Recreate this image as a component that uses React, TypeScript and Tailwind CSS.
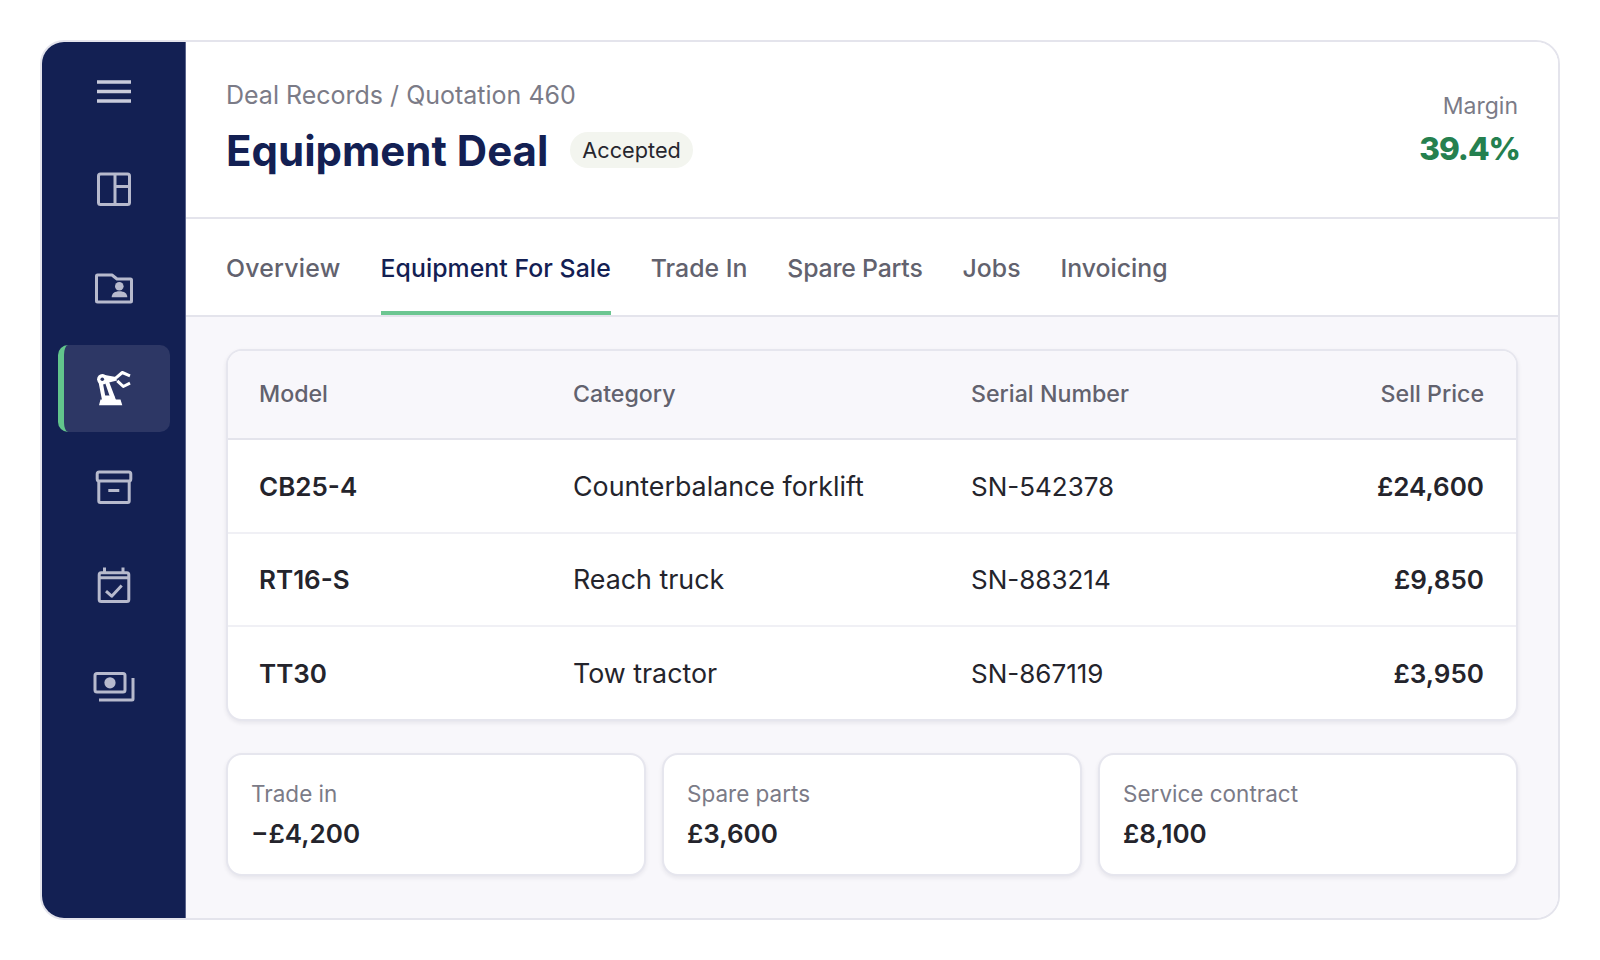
import React from "react";

const rows = [
  ["CB25-4", "Counterbalance forklift", "SN-542378", "£24,600"],
  ["RT16-S", "Reach truck", "SN-883214", "£9,850"],
  ["TT30", "Tow tractor", "SN-867119", "£3,950"],
];
const tabs = [
  { t: "Overview", c: "text-[#62626e] border-transparent tracking-[0.25px]" },
  { t: "Equipment For Sale", c: "text-[#132053] border-[#6cc691] tracking-[0.06px]" },
  { t: "Trade In", c: "text-[#62626e] border-transparent" },
  { t: "Spare Parts", c: "text-[#62626e] border-transparent tracking-[-0.2px]" },
  { t: "Jobs", c: "text-[#62626e] border-transparent" },
  { t: "Invoicing", c: "text-[#62626e] border-transparent" },
];
const cards = [
  ["Trade in", "−£4,200"],
  ["Spare parts", "£3,600"],
  ["Service contract", "£8,100"],
];

const Ico = ({ children }: { children: React.ReactNode }) => (
  <svg width="44" height="44" viewBox="0 0 44 44" fill="none" stroke="currentColor" strokeWidth="3" strokeLinejoin="round" strokeLinecap="butt">
    {children}
  </svg>
);

const item = "h-[88px] flex items-center justify-center text-[#b7bacd]";

function NavIcons() {
  return (
    <div className="flex flex-col gap-[11px] items-center pt-[5px]">
      <div className="h-[88px] flex items-center justify-center text-[#c9cbdb]">
        <Ico>
          <path d="M5 13h34M5 22.5h34M5 32h34" strokeWidth="3.4" />
        </Ico>
      </div>
      <div className={item}>
        <Ico>
          <rect x="6.5" y="6" width="31" height="30.5" rx="2" />
          <path d="M23 6v30.5M23 18.5h14.5" />
        </Ico>
      </div>
      <div className={item}>
        <Ico>
          <path d="M4.5 9a1 1 0 0 1 1-1H20l5 4h13.5a1 1 0 0 1 1 1v21a1 1 0 0 1-1 1h-33a1 1 0 0 1-1-1z" />
          <circle cx="27.3" cy="19.2" r="4.3" fill="currentColor" stroke="none" />
          <path d="M19.7 30.2c0-4 3.2-6 7.8-6s7.8 2 7.8 6z" fill="currentColor" stroke="none" />
        </Ico>
      </div>
      <div className="w-[112px] h-[87px] mt-[1px] rounded-[10px] bg-[#2d3765] border-l-[6px] border-[#62c58c] flex items-center justify-center text-white pr-[6px]">
        <Ico>
          <g fill="currentColor" stroke="none">
            <path d="M12 28.500h10l1 4h5.500l1.800 5.700H7l1.500-5.700H11z" />
            <path d="M6.500 15l4-1 3.500 19h-4zM12.500 14l3.500-2 8 21h-5z" />
            <circle cx="10.300" cy="12.200" r="5.200" />
            <path d="M10 7.500l14 2.500 1 3.500-14 3.500z" />
          </g>
          <circle cx="10.300" cy="12.200" r="1.800" fill="#2d3765" stroke="none" />
          <path d="M23.700 11.200l6.600-5.700 7.700 3.300M25.300 13.800l6 5.700 6.700-3.300" strokeWidth="3" />
        </Ico>
      </div>
      <div className="h-[88px] mt-[1px] flex items-center justify-center text-[#b7bacd]">
        <Ico>
          <rect x="5.200" y="6" width="33.600" height="9" rx="2" />
          <path d="M6.800 15v20a1.500 1.500 0 0 0 1.500 1.500h27.400a1.500 1.500 0 0 0 1.500-1.500V15M16.300 24.500h11" />
        </Ico>
      </div>
      <div className="h-[88px] -mt-[1px] flex items-center justify-center text-[#b7bacd]">
        <Ico>
          <rect x="7.200" y="8.700" width="29.600" height="28.800" rx="2" />
          <path d="M7.200 13.800h29.600M12.500 3.500v5M31 3.500v5M14 27.200l5.700 5 10-10.700" />
        </Ico>
      </div>
      <div className={item}>
        <Ico>
          <rect x="3" y="10.500" width="30" height="18.500" rx="2" />
          <circle cx="18" cy="19.800" r="5.600" fill="currentColor" stroke="none" />
          <path d="M41 15v21a1 1 0 0 1-1 1H7" />
        </Ico>
      </div>
    </div>
  );
}

export default function App() {
  return (
    <div className="w-[1600px] h-[960px] bg-white p-[40px] [font-family:Inter,'Liberation_Sans',sans-serif]">
      <div className="w-[1520px] h-[880px] rounded-[24px] border-2 border-[#e4e4ec] flex overflow-hidden">
        <aside className="w-[143px] shrink-0 bg-[#132053] pl-[16px] pr-[15px]">
          <NavIcons />
        </aside>
        <main className="flex-1 flex flex-col bg-[#f8f7fb] min-w-0 border-l border-[#5a648c]">
          <header className="h-[177px] bg-white border-b-2 border-[#e4e4ec] px-[40px] flex justify-between shrink-0">
            <div className="pt-[36px]">
              <div className="text-[25px] leading-[34px] text-[#7b7b87]">Deal Records / Quotation 460</div>
              <div className="flex items-center gap-[22px] mt-[11px]">
                <h1 className="text-[42px] leading-[56px] font-bold text-[#132053]">Equipment Deal</h1>
                <span className="h-[36px] mb-[2px] px-[12px] flex items-center rounded-full bg-[#f3f5ef] text-[21.700px] text-[#26262e]">Accepted</span>
              </div>
            </div>
            <div className="pt-[48px] text-right">
              <div className="text-[23px] leading-[32px] text-[#7b7b87]">Margin</div>
              <div className="text-[31.500px] leading-[44px] font-extrabold tracking-[-1px] -mr-[2px] text-[#25804f] mt-[5px]">39.4%</div>
            </div>
          </header>
          <nav className="h-[98px] bg-white border-b-2 border-[#e4e4ec] px-[40px] flex gap-[40px] shrink-0">
            {tabs.map((x) => (
              <div key={x.t} className={"h-[96px] flex items-center text-[24.800px] font-medium border-b-4 pt-[8px] " + x.c}>
                {x.t}
              </div>
            ))}
          </nav>
          <div className="flex-1 px-[40px] pt-[32px] flex flex-col gap-[31px] min-h-0">
            <section className="rounded-[16px] border-2 border-[#e6e6ee] shadow-[0_2px_4px_rgba(20,20,50,0.08)] overflow-hidden bg-white">
              <div className="h-[89px] bg-[#f8f7fb] border-b-2 border-[#e4e4ec] pl-[31px] pr-[32px] grid grid-cols-[314px_398px_1fr_auto] items-center text-[23.200px] font-medium text-[#62626e]">
                <div>Model</div>
                <div>Category</div>
                <div>Serial Number</div>
                <div className="text-right">Sell Price</div>
              </div>
              {rows.map((r, i) => (
                <div
                  key={r[0]}
                  className={
                    i < 2
                      ? "h-[93.500px] border-b-2 border-[#f0f0f5] pl-[31px] pr-[32px] pt-[2px] grid grid-cols-[314px_398px_1fr_auto] items-center text-[26.800px] leading-[36px] text-[#24242c]"
                      : "h-[92px] pl-[31px] pr-[32px] pt-[2px] grid grid-cols-[314px_398px_1fr_auto] items-center text-[26.800px] leading-[36px] text-[#24242c]"
                  }
                >
                  <div className="font-semibold text-[26px]">{r[0]}</div>
                  <div className="-translate-y-px">{r[1]}</div>
                  <div className="text-[26px]">{r[2]}</div>
                  <div className="text-right font-semibold text-[26px]">{r[3]}</div>
                </div>
              ))}
            </section>
            <section className="grid grid-cols-3 gap-[16px] mt-[1px]">
              {cards.map(([l, v]) => (
                <div key={l} className="h-[123px] rounded-[16px] border-2 border-[#e6e6ee] shadow-[0_2px_4px_rgba(20,20,50,0.08)] bg-white px-[23px] pt-[23px]">
                  <div className="text-[22.500px] leading-[32px] text-[#7b7b87]">{l}</div>
                  <div className="text-[26px] leading-[38px] font-semibold text-[#24242c] mt-[5px]">{v}</div>
                </div>
              ))}
            </section>
          </div>
        </main>
      </div>
    </div>
  );
}
